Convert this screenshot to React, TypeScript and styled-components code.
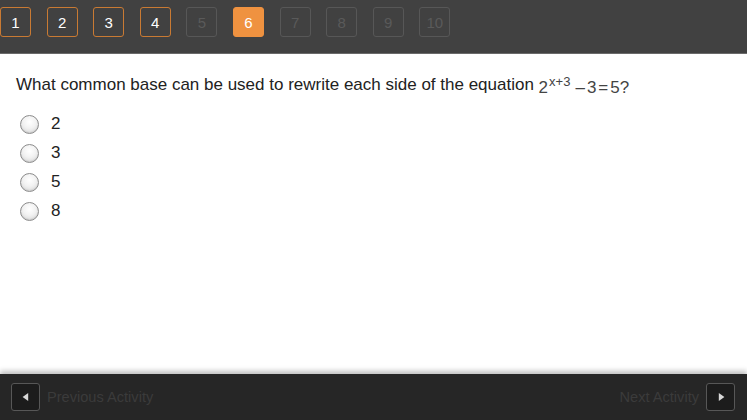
import styled, { createGlobalStyle } from "styled-components";

const GlobalStyle = createGlobalStyle`
  html, body {
    margin: 0;
    padding: 0;
    background: #ffffff;
    font-family: "Liberation Sans", Arial, sans-serif;
  }
  #root {
    height: 420px;
  }
`;

type PageState = "done" | "active" | "locked";

const pages: { label: string; state: PageState }[] = [
  { label: "1", state: "done" },
  { label: "2", state: "done" },
  { label: "3", state: "done" },
  { label: "4", state: "done" },
  { label: "5", state: "locked" },
  { label: "6", state: "active" },
  { label: "7", state: "locked" },
  { label: "8", state: "locked" },
  { label: "9", state: "locked" },
  { label: "10", state: "locked" },
];

const options = ["2", "3", "5", "8"];

export default function App() {
  return (
    <>
      <GlobalStyle />
      <Page>
        <TopBar>
          {pages.map((p) => (
            <PageBox key={p.label} $state={p.state}>
              {p.label}
            </PageBox>
          ))}
        </TopBar>
        <Content>
          <Question>
            What common base can be used to rewrite each side of the equation{" "}
            <Equation>
              2<Sup>x+3</Sup>
              <Op>–</Op>3<Op>=</Op>5?
            </Equation>
          </Question>
          <Options>
            {options.map((o) => (
              <Option key={o}>
                <Radio />
                <span>{o}</span>
              </Option>
            ))}
          </Options>
        </Content>
        <BottomBar>
          <NavGroup>
            <NavButton>
              <Arrow viewBox="0 0 10 12" $flip>
                <path d="M9 1 L2 6 L9 11 Z" />
              </Arrow>
            </NavButton>
            <NavLabel>Previous Activity</NavLabel>
          </NavGroup>
          <NavGroup>
            <NavLabel>Next Activity</NavLabel>
            <NavButton>
              <Arrow viewBox="0 0 10 12">
                <path d="M1 1 L8 6 L1 11 Z" />
              </Arrow>
            </NavButton>
          </NavGroup>
        </BottomBar>
      </Page>
    </>
  );
}

const Page = styled.div`
  width: 747px;
  height: 420px;
  display: flex;
  flex-direction: column;
  overflow: hidden;
`;

const TopBar = styled.div`
  height: 54px;
  flex-shrink: 0;
  background: #414141;
  border-bottom: 1px solid #6a6a6a;
  display: flex;
  align-items: flex-start;
  gap: 15.6px;
  padding: 7px 0 0 0;
  box-sizing: border-box;
`;

const PageBox = styled.div<{ $state: PageState }>`
  width: 31px;
  height: 30px;
  box-sizing: border-box;
  border-radius: 3px;
  display: flex;
  align-items: center;
  justify-content: center;
  font-size: 15px;
  border: 1.5px solid
    ${(p) =>
      p.$state === "done" ? "#c97a33" : p.$state === "active" ? "#ef9240" : "#575757"};
  background: ${(p) => (p.$state === "active" ? "#ef9240" : "transparent")};
  color: ${(p) => (p.$state === "locked" ? "#5a5a5a" : "#ffffff")};
`;

const Content = styled.div`
  flex: 1;
  padding: 20px 0 0 16px;
`;

const Question = styled.div`
  font-size: 17px;
  color: #222222;
  line-height: 22px;
  white-space: nowrap;
`;

const Equation = styled.span`
  font-family: "Liberation Sans", Arial, sans-serif;
  color: #444444;
  font-size: 17px;
  position: relative;
  top: 3px;
`;

const Sup = styled.sup`
  font-size: 13px;
  vertical-align: 7px;
  line-height: 0;
  margin-left: 1px;
  margin-right: 3px;
`;

const Op = styled.span`
  margin: 0 2px;
`;

const Options = styled.div`
  display: flex;
  flex-direction: column;
  gap: 11px;
  margin-top: 19px;
  padding-left: 4px;
`;

const Option = styled.div`
  display: flex;
  align-items: center;
  gap: 12px;
  font-size: 17px;
  color: #222222;
  height: 18px;
`;

const Radio = styled.span`
  width: 19px;
  height: 19px;
  box-sizing: border-box;
  border-radius: 50%;
  border: 1px solid #8c8c8c;
  background: radial-gradient(circle at 50% 35%, #ffffff 0%, #f2f2f2 45%, #d2d2d2 100%);
  box-shadow: inset 0 -1px 1px rgba(0, 0, 0, 0.08);
`;

const BottomBar = styled.div`
  height: 46px;
  flex-shrink: 0;
  background: #262626;
  box-shadow: 0 -3px 5px rgba(0, 0, 0, 0.25);
  display: flex;
  align-items: center;
  justify-content: space-between;
  padding: 0 12px 0 11px;
`;

const NavGroup = styled.div`
  display: flex;
  align-items: center;
  gap: 7px;
`;

const NavButton = styled.div`
  width: 29px;
  height: 28px;
  box-sizing: border-box;
  border: 1.5px solid #575757;
  border-radius: 3px;
  background: #1c1c1c;
  display: flex;
  align-items: center;
  justify-content: center;
`;

const Arrow = styled.svg<{ $flip?: boolean }>`
  width: 8px;
  height: 10px;
  fill: #d8d8d8;
  margin-left: ${(p) => (p.$flip ? "-2px" : "2px")};
`;

const NavLabel = styled.span`
  font-size: 14.6px;
  color: #3b3b3b;
`;
